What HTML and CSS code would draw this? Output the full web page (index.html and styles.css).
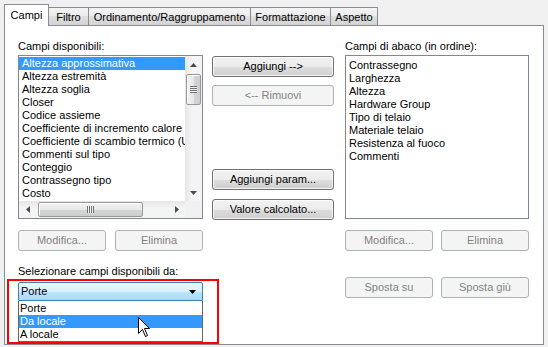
FILE: index.html
```html
<!DOCTYPE html>
<html lang="it">
<head>
<meta charset="utf-8">
<title>Proprietà abaco</title>
<link rel="stylesheet" href="styles.css">
</head>
<body>
<div class="window">
  <div class="tabs">
    <div class="tab active w-campi">Campi</div>
    <div class="tab w-filtro">Filtro</div>
    <div class="tab w-ord">Ordinamento/Raggruppamento</div>
    <div class="tab w-form">Formattazione</div>
    <div class="tab w-asp">Aspetto</div>
  </div>
  <div class="panel">
    <div class="col col-left">
      <div class="label">Campi disponibili:</div>
      <div class="listbox">
        <div class="items">
          <div class="item sel">Altezza approssimativa</div>
          <div class="item">Altezza estremità</div>
          <div class="item">Altezza soglia</div>
          <div class="item">Closer</div>
          <div class="item">Codice assieme</div>
          <div class="item">Coefficiente di incremento calore</div>
          <div class="item">Coefficiente di scambio termico (U</div>
          <div class="item">Commenti sul tipo</div>
          <div class="item">Conteggio</div>
          <div class="item">Contrassegno tipo</div>
          <div class="item">Costo</div>
        </div>
        <div class="vscroll">
          <div class="sarrow"><svg width="7" height="4" viewBox="0 0 7 4"><polygon points="0,4 7,4 3.5,0" fill="#4a4a4a"/></svg></div>
          <div class="vtrack">
            <div class="vthumb"><span class="vgrip"></span></div>
          </div>
          <div class="sarrow"><svg width="7" height="4" viewBox="0 0 7 4"><polygon points="0,0 7,0 3.5,4" fill="#4a4a4a"/></svg></div>
        </div>
        <div class="hscroll">
          <div class="sarrow"><svg width="4" height="7" viewBox="0 0 4 7"><polygon points="4,0 4,7 0,3.5" fill="#4a4a4a"/></svg></div>
          <div class="htrack">
            <div class="hthumb"><span class="hgrip"></span></div>
          </div>
          <div class="sarrow"><svg width="4" height="7" viewBox="0 0 4 7"><polygon points="0,0 0,7 4,3.5" fill="#4a4a4a"/></svg></div>
        </div>
        <div class="corner"></div>
      </div>
      <div class="btn-row">
        <button class="btn disabled">Modifica...</button>
        <button class="btn disabled">Elimina</button>
      </div>
      <div class="label sel-label">Selezionare campi disponibili da:</div>
      <div class="highlight">
        <div class="combo"><span>Porte</span><svg width="7" height="4" viewBox="0 0 7 4"><polygon points="0,0 7,0 3.5,4" fill="#000"/></svg></div>
        <div class="dropdown">
          <div class="ditem">Porte</div>
          <div class="ditem sel">Da locale</div>
          <div class="ditem">A locale</div>
          <svg class="cursor" width="13" height="21" viewBox="0 0 13 21"><path d="M0.5,0.5 L0.5,16.5 L4.5,12.5 L7.5,19.5 L9.5,18.5 L6.5,11.5 L11.5,11.5 Z" fill="#fff" stroke="#000" stroke-width="1" stroke-linejoin="miter"/></svg>
        </div>
      </div>
    </div>
    <div class="col col-mid">
      <button class="btn first">Aggiungi --&gt;</button>
      <button class="btn disabled second">&lt;-- Rimuovi</button>
      <button class="btn third">Aggiungi param...</button>
      <button class="btn fourth">Valore calcolato...</button>
    </div>
    <div class="col col-right">
      <div class="label">Campi di abaco (in ordine):</div>
      <div class="listbox plain">
        <div class="item">Contrassegno</div>
        <div class="item">Larghezza</div>
        <div class="item">Altezza</div>
        <div class="item">Hardware Group</div>
        <div class="item">Tipo di telaio</div>
        <div class="item">Materiale telaio</div>
        <div class="item">Resistenza al fuoco</div>
        <div class="item">Commenti</div>
      </div>
      <div class="btn-row">
        <button class="btn disabled">Modifica...</button>
        <button class="btn disabled">Elimina</button>
      </div>
      <div class="btn-row second-row">
        <button class="btn disabled">Sposta su</button>
        <button class="btn disabled">Sposta giù</button>
      </div>
    </div>
  </div>
</div>
</body>
</html>
```

FILE: styles.css
```css
* { box-sizing: border-box; }

html, body {
  margin: 0;
  padding: 0;
  background: #f0f0f0;
  width: 548px;
  height: 347px;
  overflow: hidden;
  font-family: "Liberation Sans", Arial, sans-serif;
  font-size: 11px;
  color: #000;
}

.window {
  padding-left: 4px;
  width: 548px;
  height: 347px;
}

/* Tabs */
.tabs {
  display: flex;
  align-items: flex-end;
  height: 25px;
}

.tab {
  height: 18px;
  border: 1px solid #898c95;
  border-bottom: none;
  margin-left: -1px;
  background: linear-gradient(#f3f3f3 0%, #ebebeb 50%, #dedede 50%, #d4d4d4 100%);
  text-align: center;
  line-height: 13px;
  padding-top: 3px;
  white-space: nowrap;
}

.tab.active {
  height: 22px;
  margin-left: 0;
  margin-bottom: -1px;
  background: #fff;
  padding-top: 4px;
  position: relative;
  z-index: 1;
}

.w-campi { width: 45px; }
.w-filtro { width: 41px; }
.w-ord { width: 163px; }
.w-form { width: 81px; }
.w-asp { width: 48px; }

/* Panel */
.panel {
  width: 540px;
  height: 320px;
  border: 1px solid #898c95;
  background: #fff;
  padding: 14px 0 0 13px;
  display: flex;
  align-items: flex-start;
}

.col { display: flex; flex-direction: column; }
.col-left { width: 185px; }
.col-mid { width: 122px; margin-left: 9px; }
.col-right { width: 184px; margin-left: 11px; }

.label {
  height: 13px;
  line-height: 13px;
  white-space: nowrap;
  margin-bottom: 2px;
}

/* List boxes */
.listbox {
  height: 164px;
  border: 1px solid #828790;
  background: #fff;
  display: grid;
  grid-template-columns: 1fr 17px;
  grid-template-rows: 1fr 17px;
}

.listbox.plain {
  display: block;
  padding: 3px 0 0 3px;
}

.items {
  padding-top: 1px;
  overflow: hidden;
}

.item {
  height: 13px;
  line-height: 13px;
  white-space: nowrap;
  overflow: hidden;
}

.items .item { padding-left: 3px; }

.item.sel, .ditem.sel {
  background: #3399ff;
  color: #fff;
}

/* Scrollbars */
.vscroll {
  display: flex;
  flex-direction: column;
  background: linear-gradient(to right, #e6e6e6, #f4f4f4 40%, #f4f4f4);
}

.hscroll {
  display: flex;
  background: linear-gradient(#e6e6e6, #f4f4f4 40%, #f4f4f4);
}

.sarrow {
  width: 17px;
  height: 17px;
  flex: none;
  display: flex;
  align-items: center;
  justify-content: center;
}

.vtrack { flex: 1; padding: 1px 1px 0 1px; }
.htrack { flex: 1; padding: 1px 0 1px 2px; }

.vthumb {
  height: 31px;
  border: 1px solid #979797;
  border-radius: 2px;
  background: linear-gradient(to right, #f3f3f3, #e8e8e8 50%, #d6d6d6 51%, #cdcdcd);
  box-shadow: inset 1px 1px 0 #fff;
  display: flex;
  align-items: center;
  justify-content: center;
}

.hthumb {
  width: 105px;
  height: 15px;
  border: 1px solid #979797;
  border-radius: 2px;
  background: linear-gradient(#f3f3f3, #e8e8e8 50%, #d6d6d6 51%, #cdcdcd);
  box-shadow: inset 1px 1px 0 #fff;
  display: flex;
  align-items: center;
  justify-content: center;
}

.vgrip {
  width: 7px;
  height: 7px;
  background: repeating-linear-gradient(#6f6f6f 0 1px, #f4f4f4 1px 2px);
}

.hgrip {
  width: 7px;
  height: 7px;
  background: repeating-linear-gradient(to right, #6f6f6f 0 1px, #f4f4f4 1px 2px);
}

.corner { background: #f0f0f0; }

/* Buttons */
.btn {
  display: block;
  height: 21px;
  padding: 0;
  border: 1px solid #707070;
  border-radius: 3px;
  background: linear-gradient(#f2f2f2 0%, #ebebeb 50%, #dddddd 51%, #cfcfcf 100%);
  box-shadow: inset 0 0 0 1px rgba(255,255,255,0.75);
  font-family: inherit;
  font-size: 11px;
  line-height: 19px;
  color: #000;
  text-align: center;
  white-space: nowrap;
}

.btn.disabled {
  border-color: #adb2b5;
  background: #f4f4f4;
  box-shadow: none;
  color: #838383;
}

.btn-row {
  display: flex;
  justify-content: space-between;
  margin-top: 11px;
}

.btn-row .btn { width: 88px; }
.btn-row.second-row { margin-top: 26px; }

.col-mid .btn { width: 122px; }
.col-mid .first { margin-top: 16px; }
.col-mid .second { margin-top: 8px; }
.col-mid .third { margin-top: 63px; }
.col-mid .fourth { margin-top: 9px; }

/* Combo with open dropdown */
.sel-label { margin-top: 14px; margin-bottom: 0; }

.highlight {
  margin: 1px -16px 0 -11px;
  border: 2px solid #ff0000;
  padding: 1px 14px 0 9px;
}

.combo {
  height: 19px;
  border: 1px solid #3c7fb1;
  border-radius: 2px 2px 0 0;
  background: linear-gradient(#eaf6fd 0%, #d9f0fc 50%, #bee6fd 51%, #a7d9f5 100%);
  display: flex;
  align-items: center;
  justify-content: space-between;
  padding: 0 6px 0 2px;
  line-height: 13px;
}

.dropdown {
  position: relative;
  border: 1px solid #646464;
  border-top: none;
  background: #fff;
  padding-top: 1px;
}

.ditem {
  height: 13px;
  line-height: 13px;
  padding-left: 1px;
  white-space: nowrap;
}

.cursor {
  position: absolute;
  left: 119px;
  top: 16px;
}
```
